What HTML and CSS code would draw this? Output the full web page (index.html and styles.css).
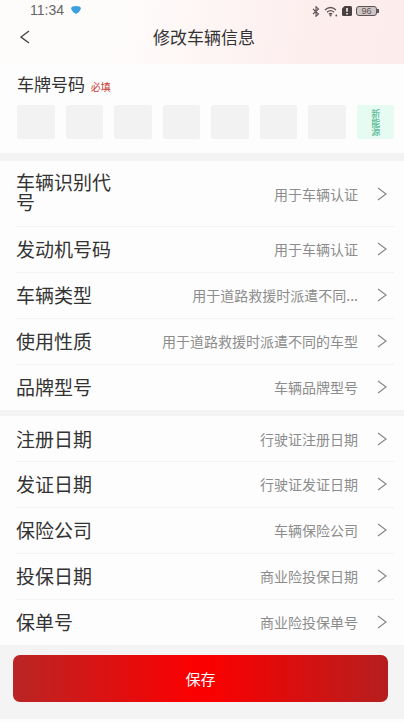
FILE: index.html
```html
<!DOCTYPE html>
<html lang="zh-CN">

<head>
    <meta charset="UTF-8">
    <meta name="viewport" content="width=device-width, initial-scale=1.0">
    <title>修改车辆信息</title>
    <link rel="stylesheet" href="styles.css">
</head>

<body>
    <header class="header">
        <div class="status">
            <span class="time">11:34</span>
            <svg class="shield" width="10" height="8" viewBox="0 0 10 8">
                <path d="M1.500 0.500 Q5 -0.500 8.500 0.500 Q10 1 9.800 3 Q9 6 5 8 Q1 6 0.200 3 Q0 1 1.500 0.500Z" fill="#3b9fe0" />
            </svg>
            <div class="status-icons">
                <svg width="8" height="11" viewBox="0 0 8 11">
                    <path d="M1 3 L6.500 8 L4 10.300 V0.700 L6.500 3 L1 8" fill="none" stroke="#5d5355" stroke-width="1.100" />
                </svg>
                <svg width="14" height="11" viewBox="0 0 14 11">
                    <path d="M1 4 Q6.500 -1 12 4 M3 6.300 Q6.500 3 10 6.300 M4.800 8.300 Q6.500 6.800 8.200 8.300" fill="none" stroke="#5d5355" stroke-width="1.300" />
                    <circle cx="6.500" cy="9.500" r="1" fill="#5d5355" />
                    <circle cx="12.300" cy="9.500" r="0.900" fill="#5d5355" />
                </svg>
                <svg width="10" height="10" viewBox="0 0 10 10">
                    <path d="M2.500 0 H8.500 Q10 0 10 1.500 V8.500 Q10 10 8.500 10 H1.500 Q0 10 0 8.500 V2.500Z" fill="#4a3f41" />
                    <path d="M5 2 V5.800 M5 7 V8.500" stroke="#fff" stroke-width="1.500" />
                </svg>
                <span class="battery">96</span>
            </div>
        </div>
        <div class="nav">
            <button class="back" type="button" aria-label="返回">
                <svg width="10" height="14" viewBox="0 0 10 14">
                    <path d="M9 1 L1 7 L9 13" fill="none" stroke="#444" stroke-width="1.400" />
                </svg>
            </button>
            <h1 class="title">修改车辆信息</h1>
        </div>
    </header>

    <form class="form">
        <fieldset class="plate">
            <legend class="plate-title">车牌号码 <span class="required">必填</span></legend>
            <div class="plate-boxes">
                <input class="box" type="text" maxlength="1" aria-label="车牌第1位">
                <input class="box" type="text" maxlength="1" aria-label="车牌第2位">
                <input class="box" type="text" maxlength="1" aria-label="车牌第3位">
                <input class="box" type="text" maxlength="1" aria-label="车牌第4位">
                <input class="box" type="text" maxlength="1" aria-label="车牌第5位">
                <input class="box" type="text" maxlength="1" aria-label="车牌第6位">
                <input class="box" type="text" maxlength="1" aria-label="车牌第7位">
                <button class="box energy" type="button">新能源</button>
            </div>
        </fieldset>

        <!-- 车辆信息 -->
        <div class="group">
            <button class="row tall" type="button">
                <span class="label">车辆识别代号</span>
                <span class="value">用于车辆认证</span>
                <svg class="arrow" viewBox="0 0 10 14"><path d="M1 1 L9 7 L1 13" /></svg>
            </button>
            <button class="row" type="button">
                <span class="label">发动机号码</span>
                <span class="value">用于车辆认证</span>
                <svg class="arrow" viewBox="0 0 10 14"><path d="M1 1 L9 7 L1 13" /></svg>
            </button>
            <button class="row" type="button">
                <span class="label">车辆类型</span>
                <span class="value">用于道路救援时派遣不同...</span>
                <svg class="arrow" viewBox="0 0 10 14"><path d="M1 1 L9 7 L1 13" /></svg>
            </button>
            <button class="row" type="button">
                <span class="label">使用性质</span>
                <span class="value">用于道路救援时派遣不同的车型</span>
                <svg class="arrow" viewBox="0 0 10 14"><path d="M1 1 L9 7 L1 13" /></svg>
            </button>
            <button class="row" type="button">
                <span class="label">品牌型号</span>
                <span class="value">车辆品牌型号</span>
                <svg class="arrow" viewBox="0 0 10 14"><path d="M1 1 L9 7 L1 13" /></svg>
            </button>
        </div>

        <!-- 证件和保险 -->
        <div class="group">
            <button class="row" type="button">
                <span class="label">注册日期</span>
                <span class="value">行驶证注册日期</span>
                <svg class="arrow" viewBox="0 0 10 14"><path d="M1 1 L9 7 L1 13" /></svg>
            </button>
            <button class="row" type="button">
                <span class="label">发证日期</span>
                <span class="value">行驶证发证日期</span>
                <svg class="arrow" viewBox="0 0 10 14"><path d="M1 1 L9 7 L1 13" /></svg>
            </button>
            <button class="row" type="button">
                <span class="label">保险公司</span>
                <span class="value">车辆保险公司</span>
                <svg class="arrow" viewBox="0 0 10 14"><path d="M1 1 L9 7 L1 13" /></svg>
            </button>
            <button class="row" type="button">
                <span class="label">投保日期</span>
                <span class="value">商业险投保日期</span>
                <svg class="arrow" viewBox="0 0 10 14"><path d="M1 1 L9 7 L1 13" /></svg>
            </button>
            <button class="row" type="button">
                <span class="label">保单号</span>
                <span class="value">商业险投保单号</span>
                <svg class="arrow" viewBox="0 0 10 14"><path d="M1 1 L9 7 L1 13" /></svg>
            </button>
        </div>

        <div class="footer">
            <button class="save" type="submit">保存</button>
        </div>
    </form>
</body>

</html>
```
FILE: styles.css
```css
* {
    margin: 0;
    padding: 0;
    box-sizing: border-box;
}

body {
    background-color: #fdfdfd;
    font-family: "Noto Sans CJK SC", sans-serif;
    color: #333;
}

button,
input {
    border: none;
    font-family: inherit;
    color: inherit;
}

button {
    cursor: pointer;
}

/* 顶部 */
.header {
    height: 64px;
    background: linear-gradient(100deg, #fefcfb 30%, #fdeeee 75%, #fdecec);
}

.status {
    height: 20px;
    padding: 0 27px 0 30px;
    display: flex;
    align-items: center;
}

.time {
    font-family: "Liberation Sans", sans-serif;
    font-size: 14px;
    line-height: 20px;
    color: #666;
}

.shield {
    margin-left: 7px;
}

.status-icons {
    margin-left: auto;
    padding-top: 2px;
    display: flex;
    align-items: center;
    gap: 4px;
}

.battery {
    position: relative;
    width: 21px;
    height: 10px;
    border: 1px solid #5d5355;
    border-radius: 3px;
    background-color: #d0c5c6;
    font-family: "Liberation Sans", sans-serif;
    font-size: 9px;
    line-height: 8px;
    text-align: center;
    color: #5d5355;
}

.battery::after {
    content: "";
    position: absolute;
    right: -3px;
    top: 2px;
    width: 2px;
    height: 4px;
    background-color: #5d5355;
}

.nav {
    height: 34px;
    padding: 0 20px;
    display: grid;
    grid-template-columns: 24px 1fr 20px;
    align-items: center;
}

.back {
    display: flex;
    align-items: center;
    height: 30px;
    background: none;
}

.title {
    font-size: 17px;
    line-height: 24px;
    font-weight: normal;
    text-align: center;
}

/* 车牌 */
.plate {
    min-width: 0;
    border: none;
    padding: 8px 10px 14px 17px;
    border-bottom: 8px solid #f3f3f3;
}

.plate-title {
    float: left;
    width: 100%;
    font-size: 17px;
    line-height: 24px;
}

.required {
    margin-left: 2px;
    font-size: 10px;
    color: #c8392f;
}

.plate-boxes {
    clear: both;
    padding-top: 6px;
    display: flex;
    gap: 11px;
}

.box {
    flex: 1;
    width: 0;
    min-width: 0;
    height: 34px;
    border-radius: 2px;
    background-color: #f3f2f2;
    text-align: center;
}

.energy {
    display: flex;
    align-items: center;
    justify-content: center;
    background-color: #e6fcf2;
    writing-mode: vertical-rl;
    font-size: 9px;
    line-height: 12px;
    color: #31a97c;
}

/* 列表 */
.group + .group {
    border-top: 6px solid #f3f3f3;
}

.row {
    position: relative;
    width: 100%;
    height: 45px;
    padding: 0 17px 0 16px;
    display: flex;
    align-items: center;
    background: none;
    text-align: left;
}

.row + .row {
    height: 46px;
}

.row + .row::before {
    content: "";
    position: absolute;
    left: 16px;
    right: 10px;
    top: 0;
    height: 1px;
    background-color: #f3f3f3;
}

.tall {
    height: 65px;
}

.label {
    width: 100px;
    font-size: 19px;
    line-height: 20px;
}

.tall .label {
    padding-bottom: 4px;
}

.value {
    flex: 1;
    font-size: 14px;
    line-height: 20px;
    text-align: right;
    white-space: nowrap;
    color: #8c8c8c;
}

.arrow {
    width: 10px;
    height: 14px;
    margin-left: 19px;
    fill: none;
    stroke: #888;
    stroke-width: 1.2;
}

/* 底部 */
.footer {
    padding: 10px 16px 17px 13px;
    background-color: #f4f4f4;
}

.save {
    width: 100%;
    height: 47px;
    display: block;
    border-radius: 7px;
    background: linear-gradient(90deg, #b92525, #fb0000 48%, #fb0000 52%, #b51e1e);
    font-size: 15px;
    color: #fff;
}
```
